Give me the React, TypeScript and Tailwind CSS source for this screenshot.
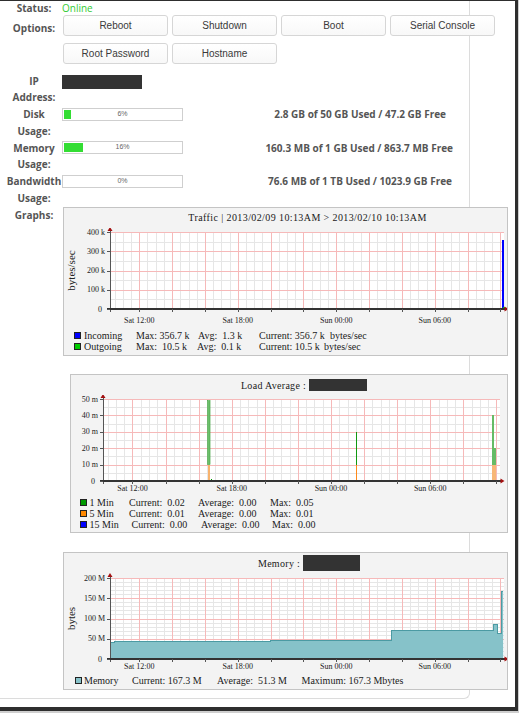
import type { ReactNode } from "react";

type Scale = { hx: (h: number) => number; vy: (v: number) => number; zero: number };

type PlotProps = {
  width: number;
  height: number;
  x0: number;
  top: number;
  zero: number;
  plotW: number;
  max: number;
  ticks: string[];
  minor: number;
  labelY: number;
  unit?: string;
  children: (s: Scale) => ReactNode;
};

// graphs cover Sat 10:13 -> Sun 10:13
const START = 10 + 13 / 60;
const TIME_LABELS = ["Sat 12:00", "Sat 18:00", "Sun 00:00", "Sun 06:00"];
const px = (v: number) => Math.round(v) + 0.5;

function Plot({ width, height, x0, top, zero, plotW, max, ticks, minor, labelY, unit, children }: PlotProps) {
  const hx = (h: number) => x0 + (h * plotW) / 24;
  const vy = (v: number) => zero - (v / max) * (zero - top);
  const majors = ticks.length - 1;
  const step = (zero - top) / majors;
  const right = x0 + plotW;

  const hMinor: number[] = [];
  for (let i = 1; i < majors * minor; i++) if (i % minor) hMinor.push(zero - (i * step) / minor);
  const hMajor = ticks.slice(0, -1).map((_, i) => top + i * step);
  const vMinor: number[] = [];
  for (let h = 17 / 60; h < 24; h += 0.5) vMinor.push(hx(h));
  const vMajor: number[] = [];
  for (let h = 12 - START; h < 24; h += 2) vMajor.push(hx(h));

  return (
    <svg width={width} height={height} className="block font-['Liberation_Serif',serif]" shapeRendering="crispEdges">
      <rect x={x0} y={top} width={plotW} height={zero - top} fill="#ffffff" />
      {hMinor.map((y) => (
        <line key={`hm${y}`} x1={x0} x2={right} y1={px(y)} y2={px(y)} stroke="#e6e6e6" />
      ))}
      {vMinor.map((x) => (
        <line key={`vm${x}`} x1={px(x)} x2={px(x)} y1={top} y2={zero} stroke="#e6e6e6" />
      ))}
      {hMajor.map((y) => (
        <line key={`hM${y}`} x1={x0} x2={right} y1={px(y)} y2={px(y)} stroke="#f6b9b9" />
      ))}
      {vMajor.map((x) => (
        <line key={`vM${x}`} x1={px(x)} x2={px(x)} y1={top} y2={zero} stroke="#f6b9b9" />
      ))}

      {children({ hx, vy, zero })}

      {/* axes */}
      <line x1={px(x0)} x2={px(x0)} y1={top - 1} y2={zero + 3} stroke="#555" />
      <rect x={x0 - 3} y={zero - 1} width={plotW + 4} height={2} fill="#333" />
      {ticks.map((_, i) => (
        <line key={`yt${i}`} x1={x0 - 3} x2={x0} y1={px(top + i * step)} y2={px(top + i * step)} stroke="#555" />
      ))}
      {vMajor.map((x) => (
        <line key={`xt${x}`} x1={px(x)} x2={px(x)} y1={zero} y2={zero + 3} stroke="#555" />
      ))}
      <polygon
        shapeRendering="auto"
        points={`${x0 - 2.5},${top - 1} ${x0 + 2.5},${top - 1} ${x0},${top - 5}`}
        fill="#a30f0f"
      />
      <polygon
        shapeRendering="auto"
        points={`${right + 0.5},${zero - 2.5} ${right + 0.5},${zero + 2.5} ${right + 4.5},${zero}`}
        fill="#a30f0f"
      />

      {/* labels */}
      {ticks.map((t, i) => (
        <text
          key={`yl${t}`}
          x={x0 - 5 - (t === "0" ? 3 : 0)}
          y={top + i * step}
          textAnchor="end"
          dominantBaseline="central"
          fontSize={8}
          fill="#222"
        >
          {t}
        </text>
      ))}
      {TIME_LABELS.map((t, i) => (
        <text
          key={t}
          x={hx(12 - START + 6 * i)}
          y={labelY}
          textAnchor="middle"
          dominantBaseline="central"
          fontSize={8}
          fill="#222"
        >
          {t}
        </text>
      ))}
      {unit && (
        <text
          x={7}
          y={(top + zero) / 2}
          transform={`rotate(-90 7 ${(top + zero) / 2})`}
          textAnchor="middle"
          dominantBaseline="central"
          fontSize={11}
          fill="#222"
        >
          {unit}
        </text>
      )}
    </svg>
  );
}

// memory usage, [hour offset, MB]
const MEMORY: [number, number][] = [
  [0, 41],
  [0.3, 42.5],
  [5.85, 43.5],
  [9.75, 44.5],
  [17.12, 69.5],
  [23.33, 86],
  [23.63, 62],
  [23.85, 167.3],
  [23.95, 167.3],
];

function memoryPath({ hx, vy, zero }: Scale, closed: boolean) {
  let d = closed ? `M${hx(0)},${zero}` : "";
  MEMORY.forEach(([h, v], i) => {
    const next = i < MEMORY.length - 1 ? MEMORY[i + 1][0] : h;
    d += `${d ? "L" : "M"}${hx(h)},${vy(v)}L${hx(next)},${vy(v)}`;
  });
  if (closed) d += `L${hx(MEMORY[MEMORY.length - 1][0])},${zero}Z`;
  return d;
}

const swatch = "shrink-0 w-[7px] h-[7px] border border-[#222]";

function TrafficGraph() {
  return (
    <div className="ml-px w-[445px] h-[149px] shrink-0 border border-[#c4c4c4] bg-[#f3f3f3] font-['Liberation_Serif',serif] text-[#1a1a1a]">
      <div className="h-[20px] pl-[44px] text-center text-[10px] leading-[20px] tracking-[0.4px]">
        {"Traffic | 2013/02/09 10:13AM > 2013/02/10 10:13AM"}
      </div>
      <Plot
        width={443}
        height={100}
        x0={46}
        top={4}
        zero={81}
        plotW={394}
        max={400}
        ticks={["400 k", "300 k", "200 k", "100 k", "0"]}
        minor={2}
        labelY={92}
        unit="bytes/sec"
      >
        {({ hx, vy, zero }) => (
          <>
            <rect x={hx(23.85)} y={vy(356.7)} width={2} height={zero - vy(356.7)} fill="#0000ff" />
            <rect x={hx(23.85) + 1} y={zero - 2} width={2} height={2} fill="#00cc00" />
          </>
        )}
      </Plot>
      <div className="pt-[1.5px] text-[10px] leading-[11px] whitespace-pre">
        <div className="flex items-center">
          <span className={`${swatch} ml-[10px] bg-[#0000ff]`} />
          <span className="ml-[3px] w-[52px]">Incoming</span>
          <span className="w-[62px]">Max: 356.7 k</span>
          <span className="w-[61px]">Avg:  1.3 k</span>
          <span className="w-[71px]">Current: 356.7 k</span>
          <span>bytes/sec</span>
        </div>
        <div className="flex items-center">
          <span className={`${swatch} ml-[10px] bg-[#00cc00]`} />
          <span className="ml-[3px] w-[52px]">Outgoing</span>
          <span className="w-[61px]">Max:  10.5 k</span>
          <span className="w-[62px]">Avg:  0.1 k</span>
          <span className="w-[65px]">Current: 10.5 k</span>
          <span>bytes/sec</span>
        </div>
      </div>
    </div>
  );
}

function LoadGraph() {
  return (
    <div className="mt-[18px] ml-[8px] w-[438px] h-[159px] shrink-0 border border-[#c4c4c4] bg-[#f3f3f3] font-['Liberation_Serif',serif] text-[#1a1a1a]">
      <div className="h-[20px] pl-[30px] flex items-center justify-center text-[10px] tracking-[0.3px]">
        <span>Load Average :</span>
        <span className="ml-[3px] w-[58px] h-[12px] bg-[#333]" />
      </div>
      <Plot
        width={436}
        height={101}
        x0={32}
        top={4}
        zero={86}
        plotW={397}
        max={50}
        ticks={["50 m", "40 m", "30 m", "20 m", "10 m", "0"]}
        minor={2}
        labelY={93}
      >
        {({ hx, vy, zero }) => (
          <>
            <rect x={hx(6.32)} y={vy(49)} width={2.5} height={vy(10) - vy(49)} fill="#6cbf6c" stroke="#2e9a2e" strokeWidth={0.5} shapeRendering="auto" />
            <rect x={hx(6.32)} y={vy(10)} width={2.5} height={zero - vy(10)} fill="#f7b36e" />
            <rect x={hx(6.5)} y={zero - 2} width={1.5} height={1.5} fill="#009900" />
            <rect x={hx(15.27)} y={vy(30)} width={1.5} height={vy(10) - vy(30)} fill="#119911" />
            <rect x={hx(15.27)} y={vy(10)} width={1.5} height={zero - vy(10)} fill="#ff8a1a" />
            <rect x={hx(23.52)} y={vy(40)} width={2} height={vy(10) - vy(40)} fill="#66bb66" />
            <rect x={hx(23.52) + 2} y={vy(20)} width={2} height={vy(10) - vy(20)} fill="#66bb66" />
            <rect x={hx(23.52)} y={vy(10)} width={4} height={zero - vy(10)} fill="#f7b777" />
          </>
        )}
      </Plot>
      <div className="pt-px text-[10px] leading-[11px] whitespace-pre">
        <div className="flex items-center">
          <span className={`${swatch} ml-[9px] bg-[#009900]`} />
          <span className="ml-[2.5px] w-[39.5px]">1 Min</span>
          <span className="w-[69px]">Current:  0.02</span>
          <span className="w-[72px]">Average:  0.00</span>
          <span>Max:  0.05</span>
        </div>
        <div className="flex items-center">
          <span className={`${swatch} ml-[9px] bg-[#ff8800]`} />
          <span className="ml-[2.5px] w-[39.5px]">5 Min</span>
          <span className="w-[69px]">Current:  0.01</span>
          <span className="w-[72px]">Average:  0.00</span>
          <span>Max:  0.01</span>
        </div>
        <div className="flex items-center">
          <span className={`${swatch} ml-[9px] bg-[#0000ff]`} />
          <span className="ml-[2.5px] w-[42px]">15 Min</span>
          <span className="w-[69.5px]">Current:  0.00</span>
          <span className="w-[71px]">Average:  0.00</span>
          <span>Max:  0.00</span>
        </div>
      </div>
    </div>
  );
}

function MemoryGraph() {
  return (
    <div className="mt-[19px] ml-px w-[445px] h-[138px] shrink-0 border border-[#c4c4c4] bg-[#f3f3f3] font-['Liberation_Serif',serif] text-[#1a1a1a]">
      <div className="h-[20px] pl-[47px] flex items-center justify-center text-[10px] tracking-[0.3px]">
        <span>Memory :</span>
        <span className="ml-[3px] w-[57px] h-[16px] bg-[#333]" />
      </div>
      <Plot
        width={443}
        height={101}
        x0={46}
        top={5}
        zero={86}
        plotW={394}
        max={200}
        ticks={["200 M", "150 M", "100 M", "50 M", "0"]}
        minor={5}
        labelY={93}
        unit="bytes"
      >
        {(s) => (
          <>
            <path d={memoryPath(s, true)} fill="#86c2c9" shapeRendering="auto" />
            <path d={memoryPath(s, false)} fill="none" stroke="#4b9aa3" strokeWidth={1} />
          </>
        )}
      </Plot>
      <div className="pt-px text-[10px] leading-[11px] whitespace-pre">
        <div className="flex items-center">
          <span className={`${swatch} ml-[11px] bg-[#86c2c9]`} />
          <span className="ml-[2px] w-[48px]">Memory</span>
          <span className="w-[85px]">Current: 167.3 M</span>
          <span className="w-[84.5px]">Average:  51.3 M</span>
          <span>Maximum: 167.3 Mbytes</span>
        </div>
      </div>
    </div>
  );
}

function Meter({ pct }: { pct: number }) {
  return (
    <div className="relative mt-[1.5px] w-[121px] h-[13px] shrink-0 border border-[#cfcfcf] bg-white p-px">
      <div className="h-full bg-[#33dd33]" style={{ width: `${pct}%` }} />
      <span className="absolute inset-0 flex items-center justify-center font-['Liberation_Sans',sans-serif] text-[7px] text-[#666]">
        {pct}%
      </span>
    </div>
  );
}

const label = "w-[56px] shrink-0 text-center font-bold text-[10px] text-[#555]";
const stat = "flex-1 text-right font-bold text-[10px] leading-[16.75px] text-[#555]";
const BUTTONS = ["Reboot", "Shutdown", "Boot", "Serial Console", "Root Password", "Hostname"];

export default function App() {
  return (
    <div className="w-[519px] h-[713px] bg-[#cfcfcf] font-['Open_Sans',sans-serif]">
      <div className="w-[518px] h-[711px] bg-[#2e2e2e] pt-px pr-[3px] pb-[4px]">
        <div className="w-full h-full overflow-hidden bg-white">
          <div className="w-[470px] h-[698px] pl-[6px] border-r border-b border-[#dcdcdc] rounded-br-[6px]">
            <div className="flex h-[14px]">
              <div className={`${label} leading-[14px]`}>Status:</div>
              <div className="text-[10px] leading-[14px] text-[#33cc33]">Online</div>
            </div>

            <div className="flex h-[57.5px]">
              <div className={`${label} mt-[6px] leading-[14px]`}>Options:</div>
              <div className="ml-px grid grid-cols-[repeat(4,105px)] auto-rows-[21px] gap-x-[4px] gap-y-[7px] content-start">
                {BUTTONS.map((b) => (
                  <button
                    key={b}
                    className="rounded-[3px] border border-[#d6d6d6] bg-gradient-to-b from-white to-[#f8f8f8] font-['Liberation_Sans',sans-serif] text-[10px] text-[#3a3a3a]"
                  >
                    {b}
                  </button>
                ))}
              </div>
            </div>

            <div className="flex items-start">
              <div className={`${label} leading-[16.75px]`}>
                IP
                <br />
                Address:
              </div>
              <div className="mt-[2.5px] w-[80px] h-[14px] bg-[#333]" />
            </div>

            <div className="flex items-start">
              <div className={`${label} leading-[16.75px]`}>
                Disk
                <br />
                Usage:
              </div>
              <Meter pct={6} />
              <div className={`${stat} pr-[23px]`}>2.8 GB of 50 GB Used / 47.2 GB Free</div>
            </div>

            <div className="flex items-start">
              <div className={`${label} leading-[16.75px]`}>
                Memory
                <br />
                Usage:
              </div>
              <Meter pct={16} />
              <div className={`${stat} pr-[16px]`}>160.3 MB of 1 GB Used / 863.7 MB Free</div>
            </div>

            <div className="flex items-start">
              <div className={`${label} leading-[16.75px]`}>
                Bandwidth
                <br />
                Usage:
              </div>
              <Meter pct={0} />
              <div className={`${stat} pr-[17px]`}>76.6 MB of 1 TB Used / 1023.9 GB Free</div>
            </div>

            <div className="flex items-start">
              <div className={`${label} leading-[16.75px]`}>Graphs:</div>
              <div className="flex flex-col pt-[0.5px]">
                <TrafficGraph />
                <LoadGraph />
                <MemoryGraph />
              </div>
            </div>
          </div>
        </div>
      </div>
    </div>
  );
}
